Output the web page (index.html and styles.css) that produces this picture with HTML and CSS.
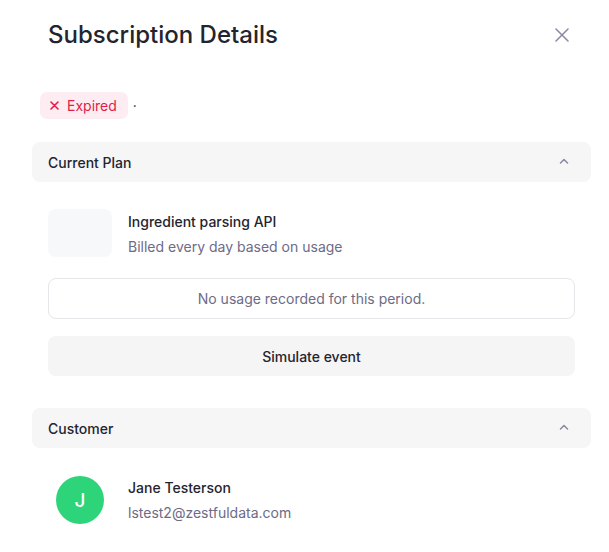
FILE: index.html
```html
<!DOCTYPE html>
<html lang="en">
<head>
<meta charset="utf-8">
<title>Subscription Details</title>
<link rel="stylesheet" href="styles.css">
</head>
<body>
<div class="panel">
  <div class="header">
    <h1 class="title">Subscription Details</h1>
    <button class="close" aria-label="Close">
      <svg width="14" height="14" viewBox="0 0 14 14"><path d="M1 1L13 13M13 1L1 13" stroke="#8a88a3" stroke-width="1.5" stroke-linecap="round"/></svg>
    </button>
  </div>
  <div class="status-row">
    <span class="badge">
      <svg width="9" height="9" viewBox="0 0 9 9"><path d="M1 1L8 8M8 1L1 8" stroke="#e11d48" stroke-width="1.6" stroke-linecap="round"/></svg>
      Expired
    </span>
    <span class="dot">·</span>
  </div>

  <section class="section">
    <div class="section-head">
      <span>Current Plan</span>
      <svg class="chev" width="10" height="6" viewBox="0 0 10 6"><path d="M1.5 5L5 1.5L8.5 5" fill="none" stroke="#8a88a3" stroke-width="1.5" stroke-linecap="round" stroke-linejoin="round"/></svg>
    </div>
    <div class="section-body plan-body">
      <div class="plan-row">
        <div class="plan-icon"></div>
        <div class="info plan-info">
          <div class="primary">Ingredient parsing API</div>
          <div class="secondary">Billed every day based on usage</div>
        </div>
      </div>
      <div class="usage">No usage recorded for this period.</div>
      <button class="simulate">Simulate event</button>
    </div>
  </section>

  <section class="section">
    <div class="section-head">
      <span>Customer</span>
      <svg class="chev" width="10" height="6" viewBox="0 0 10 6"><path d="M1.5 5L5 1.5L8.5 5" fill="none" stroke="#8a88a3" stroke-width="1.5" stroke-linecap="round" stroke-linejoin="round"/></svg>
    </div>
    <div class="section-body customer-body">
      <div class="avatar">J</div>
      <div class="info">
        <div class="primary">Jane Testerson</div>
        <div class="secondary">lstest2@zestfuldata.com</div>
      </div>
    </div>
  </section>
</div>
</body>
</html>
```
FILE: styles.css
```css
* { box-sizing: border-box; }
html, body { margin: 0; padding: 0; background: #ffffff; }
body {
  font-family: Inter, "Noto Sans", sans-serif;
  color: #1f1f29;
  width: 609px;
  height: 552px;
  overflow: hidden;
}
.panel {
  padding: 19px 18px 0 32px;
}
.header {
  display: flex;
  align-items: center;
  justify-content: space-between;
  padding-left: 16px;
  padding-right: 19px;
}
.title {
  margin: 0;
  font-size: 24px;
  line-height: 32px;
  font-weight: 500;
  color: #24242e;
}
.close {
  border: 0;
  background: none;
  padding: 0;
  width: 20px;
  height: 20px;
  display: flex;
  align-items: center;
  justify-content: center;
}
.status-row {
  margin-top: 41px;
  padding-left: 8px;
  display: flex;
  align-items: center;
  gap: 5px;
}
.badge {
  display: inline-flex;
  align-items: center;
  gap: 8px;
  height: 27px;
  padding: 0 11px 0 10px;
  background: #fdedf2;
  color: #e11d48;
  border-radius: 7px;
  font-size: 14px;
  line-height: 20px;
}
.dot { font-size: 14px; color: #333; }
.section { margin-top: 23px; }
.section + .section { margin-top: 32px; }
.section-head {
  height: 40px;
  background: #f6f6f7;
  border-radius: 8px;
  display: flex;
  align-items: center;
  justify-content: space-between;
  padding: 0 22px 0 16px;
  font-size: 14px;
  font-weight: 500;
  color: #24242e;
}
.chev { margin-top: -2px; }
.section-body {
  padding: 27px 16px 0 16px;
}
.plan-row {
  display: flex;
  align-items: center;
  gap: 16px;
}
.plan-icon {
  width: 64px;
  height: 48px;
  border-radius: 8px;
  background: #f7f8fa;
}
.info { display: flex; flex-direction: column; gap: 5px; }
.plan-info { padding-top: 3px; }
.primary {
  font-size: 14px;
  line-height: 20px;
  font-weight: 500;
  color: #24242e;
}
.secondary {
  font-size: 14px;
  line-height: 20px;
  color: #6d6b86;
}
.usage {
  margin-top: 21px;
  height: 41px;
  border: 1px solid #e6e6ea;
  border-radius: 8px;
  display: flex;
  align-items: center;
  justify-content: center;
  font-size: 14px;
  color: #6d6b86;
}
.simulate {
  margin-top: 17px;
  width: 100%;
  height: 40px;
  border: 0;
  border-radius: 8px;
  background: #f5f5f6;
  font-family: inherit;
  font-size: 14px;
  font-weight: 500;
  color: #24242e;
}
.customer-body {
  padding-top: 28px;
  padding-left: 24px;
  display: flex;
  align-items: center;
  gap: 24px;
}
.customer-body .info { padding-top: 1px; }
.avatar {
  width: 48px;
  height: 48px;
  border-radius: 50%;
  background: #2ed479;
  color: #ffffff;
  display: flex;
  align-items: center;
  justify-content: center;
  font-size: 19px;
  font-weight: 500;
}
```
